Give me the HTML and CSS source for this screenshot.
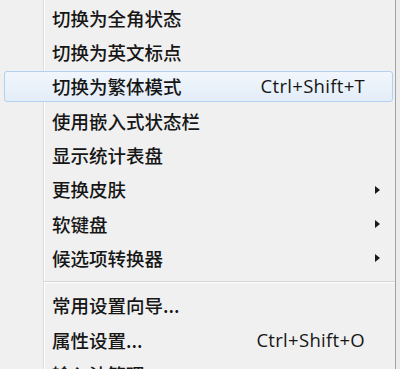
FILE: index.html
```html
<!DOCTYPE html>
<html lang="zh-CN">
<head>
<meta charset="utf-8">
<title>输入法菜单</title>
<link rel="stylesheet" href="styles.css">
</head>
<body>
<div class="menu">
  <div class="item"><div class="inner"><span class="label">切换为全角状态</span></div></div>
  <div class="item"><div class="inner"><span class="label">切换为英文标点</span></div></div>
  <div class="item"><div class="inner active"><span class="label">切换为繁体模式</span><span class="key">Ctrl+Shift+T</span><span class="sub"></span></div></div>
  <div class="item"><div class="inner"><span class="label">使用嵌入式状态栏</span></div></div>
  <div class="item"><div class="inner"><span class="label">显示统计表盘</span></div></div>
  <div class="item"><div class="inner"><span class="label">更换皮肤</span><span class="sub"><i class="arrow"></i></span></div></div>
  <div class="item"><div class="inner"><span class="label">软键盘</span><span class="sub"><i class="arrow"></i></span></div></div>
  <div class="item"><div class="inner"><span class="label">候选项转换器</span><span class="sub"><i class="arrow"></i></span></div></div>
  <div class="sep"></div>
  <div class="item"><div class="inner"><span class="label">常用设置向导...</span></div></div>
  <div class="item"><div class="inner"><span class="label">属性设置...</span><span class="key">Ctrl+Shift+O</span><span class="sub"></span></div></div>
  <div class="item"><div class="inner"><span class="label">输入法管理</span></div></div>
</div>
</body>
</html>
```

FILE: styles.css
```css
html, body {
  margin: 0;
  padding: 0;
  height: 100%;
  overflow: hidden;
}
body {
  background: #ececec;
  font-family: "Noto Sans CJK SC", "Noto Sans", sans-serif;
  font-size: 18.5px;
  color: #161616;
}
.menu {
  width: 396px;
  height: 100%;
  padding-top: 1px;
  box-sizing: border-box;
  border-right: 1px solid #a3a3a3;
  background:
    linear-gradient(to right, transparent 43px, #dcdcdc 43px, #dcdcdc 44px, #ffffff 44px, #ffffff 45px, transparent 45px),
    #f0f0f0;
}
.item {
  height: 34.3px;
  box-sizing: border-box;
  padding: 1.5px 2px 1.5px 4px;
}
.inner {
  height: 100%;
  box-sizing: border-box;
  display: flex;
  align-items: center;
  padding-left: 47px;
  border: 1px solid transparent;
  border-radius: 3px;
  line-height: 1;
}
.inner.active {
  border-color: #b2d0ef;
  background: linear-gradient(to bottom, #f1f6fc, #e3edf8);
}
.label {
  flex: 1;
  white-space: nowrap;
  font-weight: 500;
}
.key {
  font-family: "Open Sans", "Noto Sans", sans-serif;
  font-size: 18.5px;
  letter-spacing: 0.3px;
  white-space: nowrap;
}
.sub {
  width: 27px;
  flex: none;
  display: flex;
  align-items: center;
  padding-left: 10px;
  box-sizing: border-box;
}
.arrow {
  display: block;
  width: 0;
  height: 0;
  border-top: 4.5px solid transparent;
  border-bottom: 4.5px solid transparent;
  border-left: 5px solid #1a1a1a;
}
.sep {
  height: 13px;
  box-sizing: border-box;
  padding-top: 6px;
  margin-left: 44px;
}
.sep::before {
  content: "";
  display: block;
  height: 1px;
  background: #d5d5d5;
  border-bottom: 1px solid #ffffff;
}
```
